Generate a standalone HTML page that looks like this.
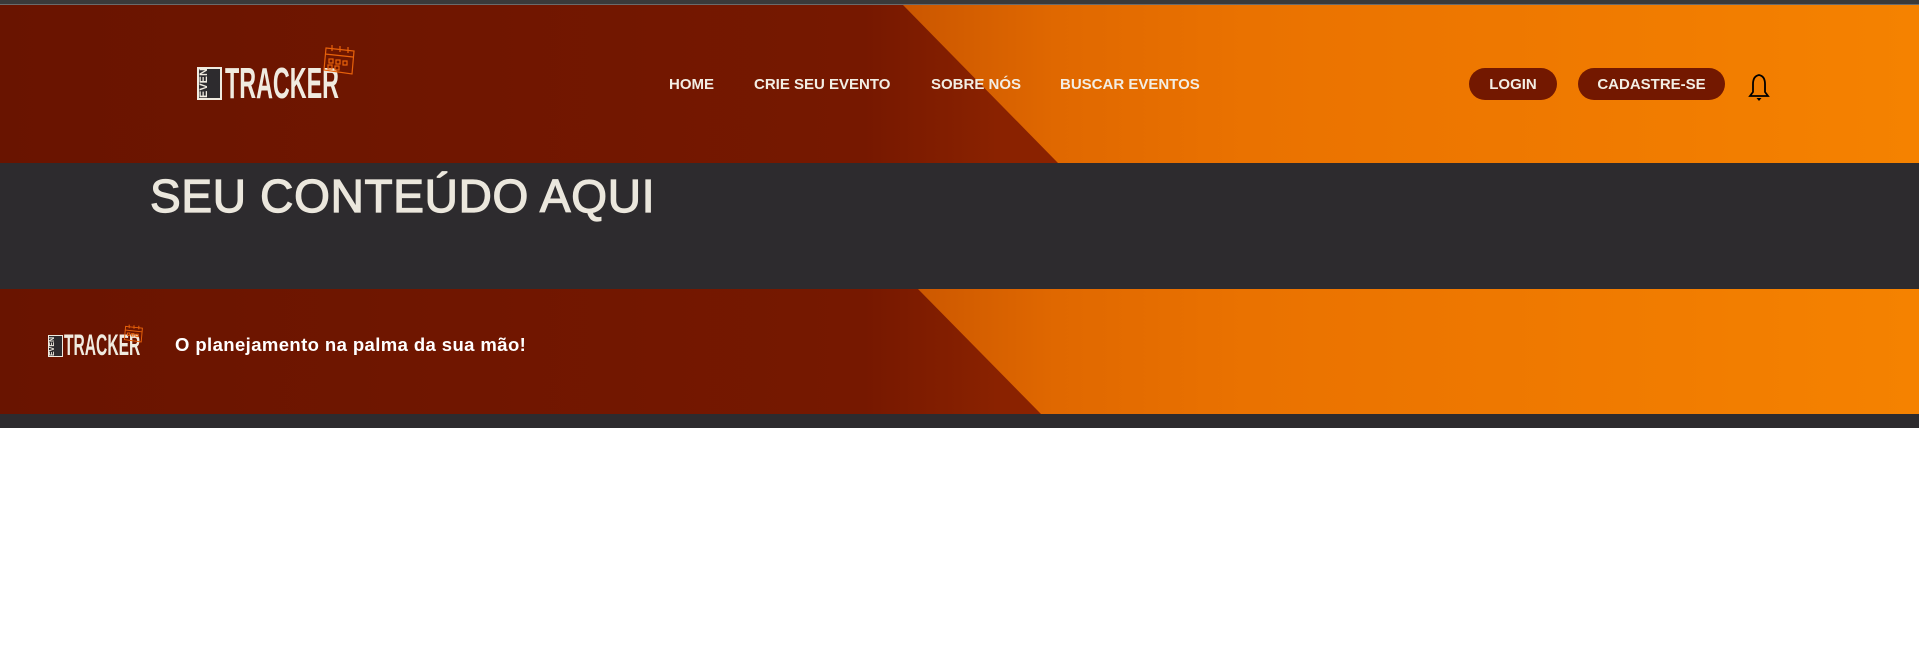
<!DOCTYPE html>
<html><head><meta charset="utf-8"><style>
*{margin:0;padding:0;box-sizing:border-box}
body{width:1919px;height:648px;background:#fff;font-family:"Liberation Sans",sans-serif;position:relative;overflow:hidden}
.top{position:absolute;left:0;top:0;width:1919px;height:5px;background:#3a3a3a;border-bottom:1px solid #6a6a6a}
.band{position:absolute;left:0;width:1919px;overflow:hidden;background:linear-gradient(90deg,#691400 0%,#761800 45%,#8a2200 52%)}
.band .or{position:absolute;top:0;left:0;height:100%;width:1919px;background:linear-gradient(90deg,#c85400 46%,#e06800 55%,#ea7200 65%,#f58200 100%)}
.hdr{top:5px;height:158px}
.ftr{top:289px;height:125px}
.mid{position:absolute;left:0;top:163px;width:1919px;height:126px;background:#2d2b2e}
.strip{position:absolute;left:0;top:414px;width:1919px;height:14px;background:#2d2b2e}
.nav{position:absolute;top:76px;color:#f3eee4;font-weight:bold;font-size:15px}
.btn{position:absolute;top:68px;height:32px;border-radius:16px;background:#731800;color:#f3eee4;font-weight:bold;font-size:15px;line-height:34px;text-align:center}
.even{position:absolute;font-weight:bold;writing-mode:vertical-rl;transform:rotate(180deg);text-align:center;line-height:1}
.trk{position:absolute;color:#f0ebe0;font-weight:bold;transform-origin:0 0;white-space:nowrap;line-height:1}
</style></head><body>
<div class="top"></div>
<div class="band hdr"><div class="or" style="clip-path:polygon(903px 0,1919px 0,1919px 158px,1058px 158px)"></div></div>
<div class="mid"></div>
<div class="band ftr"><div class="or" style="clip-path:polygon(918px 0,1919px 0,1919px 125px,1041px 125px)"></div></div>
<div class="strip"></div>

<div class="even" style="left:197px;top:67px;width:25px;height:33px;font-size:11px;border:2px solid #f0ebe0;background:#2d2b2e;color:#f0ebe0">EVEN</div>
<div class="trk" style="left:225px;top:62px;font-size:44px;transform:scaleX(0.53)">TRACKER</div>
<svg style="position:absolute;left:320px;top:42px" width="40" height="34" viewBox="0 0 40 34"><g fill="none" stroke="#e8620a" stroke-width="1.2"><path d="M6 6 L34 9 L32 32 L4 28 Z"/><path d="M5 12 L33 15"/><path d="M12 3v6M20 4v6M28 5v6"/><rect x="9" y="17" width="4" height="4"/><rect x="16" y="18" width="4" height="4"/><rect x="23" y="19" width="4" height="4"/><rect x="8" y="23" width="4" height="4"/><rect x="15" y="24" width="4" height="4"/></g></svg>

<div class="nav" style="left:669px">HOME</div>
<div class="nav" style="left:754px">CRIE SEU EVENTO</div>
<div class="nav" style="left:931px">SOBRE NÓS</div>
<div class="nav" style="left:1060px">BUSCAR EVENTOS</div>
<div class="btn" style="left:1469px;width:88px">LOGIN</div>
<div class="btn" style="left:1578px;width:147px">CADASTRE-SE</div>
<svg style="position:absolute;left:1747px;top:73px" width="24" height="28" viewBox="0 0 24 28"><g fill="none" stroke="#000" stroke-width="1.8"><path d="M12 2 C7 3 6 7 6 11 L6 19 L3 23 L21 23 L18 19 L18 11 C18 7 17 3 12 2Z"/></g><path d="M9.5 25 h5 l-2.5 3z" fill="#000"/></svg>

<div style="position:absolute;left:150px;top:169px;color:#ebe7dd;font-size:46px;letter-spacing:0.7px;-webkit-text-stroke:1.2px #ebe7dd">SEU CONTEÚDO AQUI</div>

<div class="even" style="left:48px;top:335px;width:15px;height:22px;font-size:7px;border:1px solid #f0ebe0;background:#2d2b2e;color:#f0ebe0">EVEN</div>
<div class="trk" style="left:64px;top:331px;font-size:30px;transform:scaleX(0.52)">TRACKER</div>
<svg style="position:absolute;left:122px;top:322px" width="24" height="22" viewBox="0 0 40 34"><g fill="none" stroke="#e8620a" stroke-width="1.6"><path d="M6 6 L34 9 L32 32 L4 28 Z"/><path d="M5 12 L33 15"/><path d="M12 3v6M20 4v6M28 5v6"/><rect x="9" y="17" width="4" height="4"/><rect x="16" y="18" width="4" height="4"/><rect x="23" y="19" width="4" height="4"/></g></svg>
<div style="position:absolute;left:175px;top:334px;color:#fff;font-size:18.5px;font-weight:bold;letter-spacing:0.4px">O planejamento na palma da sua mão!</div>
</body></html>
